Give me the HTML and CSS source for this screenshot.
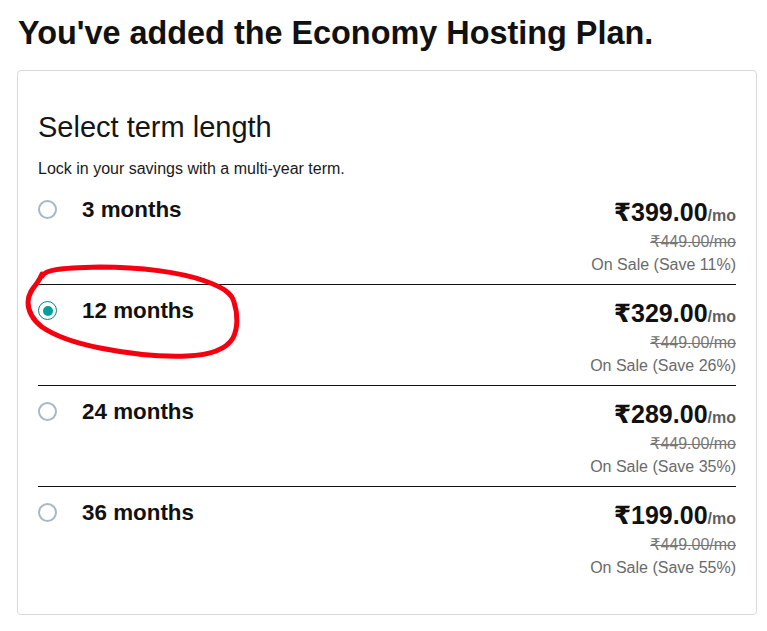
FILE: index.html
```html
<!DOCTYPE html>
<html lang="en">
<head>
<meta charset="utf-8">
<title>Economy Hosting Plan</title>
<link rel="stylesheet" href="styles.css">
</head>
<body>
<main class="page">
  <h1 class="title">You've added the Economy Hosting Plan.</h1>
  <section class="card">
    <h2 class="card-title">Select term length</h2>
    <p class="card-sub">Lock in your savings with a multi-year term.</p>
    <ul class="terms">
      <li class="term">
        <div class="term-left"><span class="radio"></span><span class="term-name">3 months</span></div>
        <div class="term-price">
          <div class="price">₹399.00<span class="per">/mo</span></div>
          <div class="old">₹449.00/mo</div>
          <div class="sale">On Sale (Save 11%)</div>
        </div>
      </li>
      <li class="term">
        <div class="term-left"><span class="radio checked"></span><span class="term-name">12 months</span></div>
        <div class="term-price">
          <div class="price">₹329.00<span class="per">/mo</span></div>
          <div class="old">₹449.00/mo</div>
          <div class="sale">On Sale (Save 26%)</div>
        </div>
      </li>
      <li class="term">
        <div class="term-left"><span class="radio"></span><span class="term-name">24 months</span></div>
        <div class="term-price">
          <div class="price">₹289.00<span class="per">/mo</span></div>
          <div class="old">₹449.00/mo</div>
          <div class="sale">On Sale (Save 35%)</div>
        </div>
      </li>
      <li class="term">
        <div class="term-left"><span class="radio"></span><span class="term-name">36 months</span></div>
        <div class="term-price">
          <div class="price">₹199.00<span class="per">/mo</span></div>
          <div class="old">₹449.00/mo</div>
          <div class="sale">On Sale (Save 55%)</div>
        </div>
      </li>
    </ul>
  </section>
</main>
<svg class="annotation" viewBox="0 0 767 631" width="767" height="631" aria-hidden="true">
  <path d="M42 276 C46 270 56 268 100 267 C140 267 180 272 205 281 C225 288 232 294 234 302 C238 314 238 328 233 338 C226 350 210 355 187 356 C160 357 130 354 100 348 C75 343 55 336 42 327 C33 320 28 312 28 302 C28 294 33 288 37 283 C40 279 41 276 42 274" fill="none" stroke="#f5000f" stroke-width="5" stroke-linecap="round" stroke-linejoin="round"/>
</svg>
</body>
</html>
```

FILE: styles.css
```css
html, body {
  margin: 0;
  padding: 0;
  background: #ffffff;
}

body {
  font-family: "Liberation Sans", Arial, "DejaVu Sans", sans-serif;
  color: #111111;
  position: relative;
  width: 767px;
  height: 631px;
  overflow: hidden;
}

.page {
  padding: 13px 0 0 17px;
  width: 740px;
}

.title {
  margin: 0 0 17px 1px;
  font-size: 32.4px;
  line-height: 40px;
  font-weight: 700;
  color: #111111;
}

.card {
  box-sizing: border-box;
  width: 740px;
  height: 545px;
  border: 1px solid #d6dbde;
  border-radius: 4px;
  padding: 38px 20px 26px;
}

.card-title {
  margin: 0;
  font-size: 29px;
  line-height: 36px;
  font-weight: 400;
  color: #151515;
}

.card-sub {
  margin: 12px 0 2px;
  font-size: 16px;
  line-height: 24px;
  color: #1a1a1a;
}

.terms {
  list-style: none;
  margin: 0;
  padding: 0;
}

.term {
  display: flex;
  justify-content: space-between;
  align-items: flex-start;
  height: 101px;
  box-sizing: border-box;
  border-top: 1px solid #111111;
  padding: 13px 0 11px;
}

.term:first-child {
  border-top-color: transparent;
}

.term-left {
  display: flex;
  align-items: flex-start;
}

.radio {
  box-sizing: border-box;
  width: 19px;
  height: 19px;
  border: 2px solid #a9b8c4;
  border-radius: 50%;
  margin-top: 3px;
  margin-right: 25px;
  display: flex;
  align-items: center;
  justify-content: center;
}

.radio.checked {
  border: 1.5px solid #0a7f86;
}

.radio.checked::after {
  content: "";
  width: 10px;
  height: 10px;
  border-radius: 50%;
  background: #00a09a;
}

.term-name {
  font-size: 22.4px;
  line-height: 26px;
  font-weight: 700;
  color: #111111;
}

.term-price {
  text-align: right;
}

.price {
  font-size: 25px;
  line-height: 30px;
  font-weight: 700;
  color: #111111;
}

.per {
  font-size: 16px;
  font-weight: 700;
  color: #5f5f5f;
}

.old {
  font-size: 16px;
  line-height: 22px;
  color: #777777;
  text-decoration: line-through;
}

.sale {
  font-size: 16px;
  line-height: 24px;
  color: #6a6a6a;
}

.annotation {
  position: absolute;
  top: 0;
  left: 0;
  pointer-events: none;
}
```
